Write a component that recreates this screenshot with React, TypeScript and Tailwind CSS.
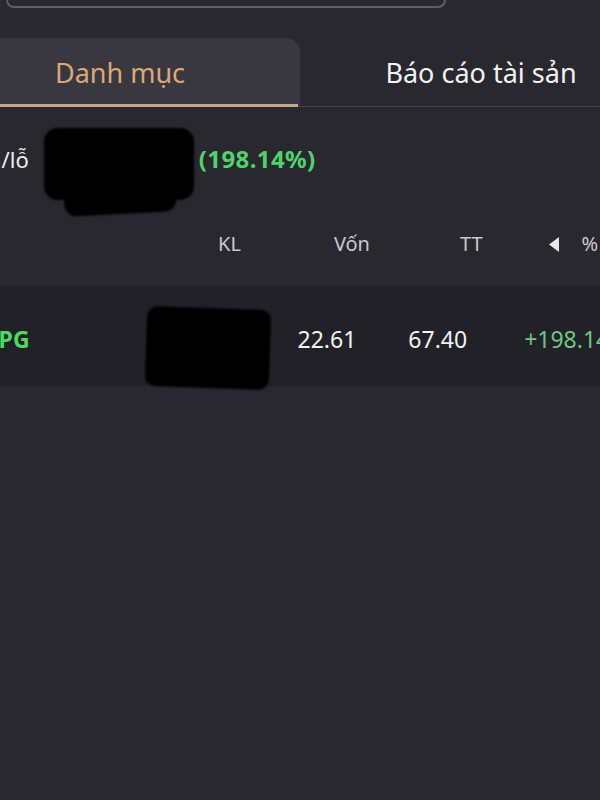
import React from "react";

export default function App() {
  return (
    <div
      className="relative w-[600px] h-[800px] overflow-hidden bg-[#29282f] text-white"
      style={{ fontFamily: '"Noto Sans", "Open Sans", sans-serif' }}
    >
      {/* top input box bottom edge */}
      <div className="ml-[6px] w-[440px] h-[8px] border-2 border-t-0 border-[#5f5e64] rounded-b-[10px]" />

      {/* tabs */}
      <div className="mt-[30px] flex h-[69px] border-b border-[#45444a] ml-[-60px] w-[720px]">
        <div className="relative shrink-0 w-[360px] h-full rounded-tr-[14px] bg-[#39383e] flex items-center justify-center">
          <span className="text-[27px] text-[#dba879] leading-none">Danh mục</span>
          <div className="absolute left-0 right-[2px] bottom-[-1px] h-[3px] bg-[#c8a78a]" />
        </div>
        <div className="shrink-0 w-[362px] h-full flex items-center justify-center">
          <span className="text-[27px] text-[#f2f2f2] leading-none">Báo cáo tài sản</span>
        </div>
      </div>

      {/* P/L row */}
      <div className="mt-[37px] flex items-center h-[30px] ml-[-28px]">
        <span className="shrink-0 text-[22px] text-[#eeeeee]">Lãi/lỗ</span>
        <span className="shrink-0 ml-[170px] text-[24px] font-bold text-[#4fd36b] tracking-[0.4px]">(198.14%)</span>
      </div>

      {/* header row */}
      <div className="mt-[56px] flex items-center h-[28px] text-[20px] text-[#c9c9cd]">
        <span className="ml-[218px]">KL</span>
        <span className="ml-[93px]">Vốn</span>
        <span className="ml-[90px]">TT</span>
        <svg className="ml-[65px] shrink-0" width="12" height="15" viewBox="0 0 12 15">
          <path d="M11 0 L11 15 L1 7.5 Z" fill="#e8e8ea" />
        </svg>
        <span className="ml-[22px] shrink-0">%</span>
      </div>

      {/* data row */}
      <div className="mt-[28px] h-[100px] bg-[#222127] flex items-center pt-[6px] text-[23px] whitespace-nowrap">
        <span className="shrink-0 ml-[-19px] font-bold text-[#4ed85f]">HPG</span>
        <span className="shrink-0 ml-[268px] text-[#f2f2f2]">22.61</span>
        <span className="shrink-0 ml-[52px] text-[#f2f2f2]">67.40</span>
        <span className="shrink-0 ml-[57px] text-[#6cc784]">+198.14%</span>
      </div>

      {/* redaction blobs */}
      <div className="absolute left-[44px] top-[128px] w-[150px] h-[72px] bg-black rounded-[14px] blur-[1px]" />
      <div className="absolute left-[64px] top-[180px] w-[112px] h-[34px] bg-black rounded-[12px] -rotate-3 blur-[1px]" />
      <div className="absolute left-[146px] top-[308px] w-[124px] h-[80px] bg-black rounded-[10px] rotate-[2deg] blur-[1px]" />
    </div>
  );
}
